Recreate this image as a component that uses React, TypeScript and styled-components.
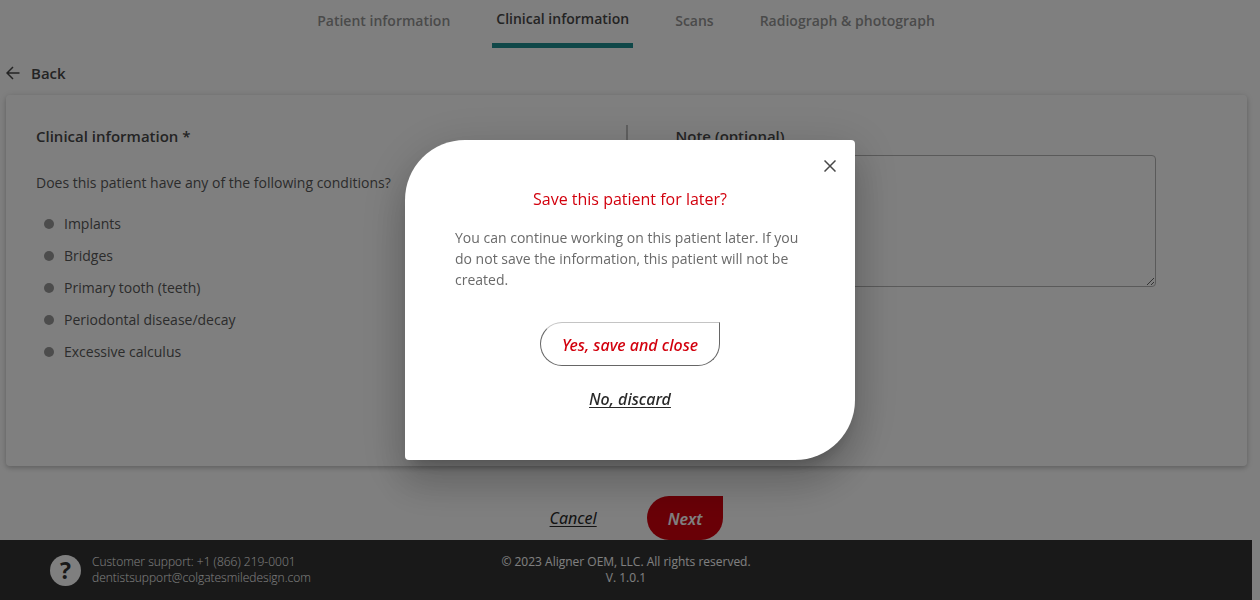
import React from "react";
import styled, { createGlobalStyle, css } from "styled-components";

const bodyFont = '"Open Sans", "Noto Sans", sans-serif';
const actionFont = '"Noto Sans", "Open Sans", sans-serif';

const GlobalStyle = createGlobalStyle`
  *, *::before, *::after { box-sizing: border-box; }
  body {
    margin: 0;
    background: #fff;
    color: #585858;
    font-family: ${bodyFont};
    font-size: 14px;
    font-weight: 400;
  }
  h1, h2, p, ul { margin: 0; padding: 0; }
  button, textarea { font-family: inherit; }
`;

const Page = styled.div`
  display: flex;
  flex-direction: column;
  min-height: 100vh;
  padding-right: 8px;
`;

const Tabs = styled.nav`
  display: flex;
  justify-content: center;
  align-items: flex-start;
  gap: 38px;
  height: 48px;
`;

const Tab = styled.a<{ $active?: boolean }>`
  padding: 11px 4px;
  color: #959595;
  font-size: 14px;
  font-weight: 600;
  line-height: 20px;
  text-decoration: none;
  ${(p) =>
    p.$active &&
    css`
      padding: 9px 4px 14px;
      color: #484848;
      border-bottom: 5px solid #1e8e90;
    `}
`;

const Content = styled.main`
  display: flex;
  flex-direction: column;
  flex: 1;
  padding: 0 5px 0 6px;
`;

const BackLink = styled.a`
  display: flex;
  align-items: center;
  align-self: flex-start;
  gap: 11px;
  padding: 13px 0 10px;
  color: #484848;
  font-size: 15px;
  font-weight: 600;
  line-height: 24px;
  text-decoration: none;
`;

const Card = styled.section`
  display: grid;
  grid-template-columns: 1fr 1fr;
  flex: 1;
  min-height: 371px;
  padding: 30px 32px 30px 30px;
  border-radius: 4px;
  background: #fff;
  box-shadow: 0 2px 4px rgba(0, 0, 0, 0.16), 0 1px 8px rgba(0, 0, 0, 0.12);
`;

const NotePanel = styled.div`
  display: flex;
  flex-direction: column;
  align-items: flex-start;
  gap: 8px;
  padding-left: 48px;
  border-left: 2px solid #c0c0c0;
`;

const sectionTitle = css`
  color: #484848;
  font-size: 15px;
  font-weight: 600;
  line-height: 22px;
`;

const SectionTitle = styled.h1`
  ${sectionTitle}
`;

const NoteLabel = styled.label`
  ${sectionTitle}
`;

const NoteInput = styled.textarea`
  width: 89%;
  height: 132px;
  padding: 8px;
  border: 1px solid #b4b4b4;
  border-radius: 4px;
  background: transparent;
  font-size: 14px;
`;

const Question = styled.p`
  margin-top: 26px;
  line-height: 20px;
`;

const ConditionList = styled.ul`
  margin-top: 15px;
  padding-left: 8px;
  list-style: none;
`;

const Condition = styled.label`
  display: flex;
  align-items: center;
  gap: 10px;
  line-height: 32px;
`;

const Dot = styled.input`
  appearance: none;
  width: 10px;
  height: 10px;
  margin: 0;
  border-radius: 50%;
  background: #989898;
`;

const Actions = styled.div`
  display: flex;
  justify-content: center;
  align-items: center;
  gap: 50px;
  padding: 30px 0 0 20px;
`;

const TextButton = styled.button<{ $strong?: boolean }>`
  padding: 0;
  border: 0;
  background: none;
  color: #282828;
  font-family: ${actionFont};
  font-size: 16px;
  font-style: italic;
  font-weight: ${(p) => (p.$strong ? 500 : 400)};
  line-height: 24px;
  text-decoration: underline;
  text-decoration-skip-ink: none;
  text-underline-offset: 2px;
`;

const PillButton = styled.button<{ $filled?: boolean }>`
  height: 44px;
  padding: 2px 21px 0;
  border: 1px solid #666;
  border-top-color: #c4c4c4;
  border-radius: 22px 0 22px 22px;
  background: #fff;
  color: #d2000d;
  font-family: ${actionFont};
  font-size: 16px;
  font-style: italic;
  font-weight: 500;
  line-height: 24px;
  ${(p) =>
    p.$filled &&
    css`
      border: 0;
      color: #fff;
      background: #d2000d;
      font-weight: 600;
    `}
`;

const Footer = styled.footer`
  display: grid;
  grid-template-columns: 1fr auto 1fr;
  align-items: center;
  height: 60px;
  padding: 0 50px;
  background: #333;
  color: #fff;
  font-size: 12px;
  line-height: 16px;
`;

const Support = styled.div`
  display: flex;
  align-items: center;
  gap: 11px;
  font-weight: 300;
`;

const HelpBadge = styled.span`
  display: flex;
  align-items: center;
  justify-content: center;
  width: 31px;
  height: 31px;
  border-radius: 50%;
  background: #fff;
  color: #333;
  font-size: 23px;
  font-weight: 700;
`;

const FooterLink = styled.a`
  color: inherit;
  text-decoration: none;
`;

const Copyright = styled.p`
  text-align: center;
`;

const Overlay = styled.div`
  position: fixed;
  inset: 0;
  display: flex;
  align-items: center;
  justify-content: center;
  background: rgba(0, 0, 0, 0.5);
`;

const Dialog = styled.div`
  display: flex;
  flex-direction: column;
  width: 450px;
  max-width: 100%;
  padding: 16px 15px 49px;
  border-radius: 60px 4px 60px 4px;
  background: #fff;
  box-shadow: 0 11px 15px -7px rgba(0, 0, 0, 0.2),
    0 24px 38px 3px rgba(0, 0, 0, 0.14), 0 9px 46px 8px rgba(0, 0, 0, 0.12);
`;

const CloseButton = styled.button`
  display: flex;
  align-items: center;
  justify-content: center;
  align-self: flex-end;
  width: 20px;
  height: 20px;
  padding: 0;
  border: 0;
  background: none;
  color: #484848;
`;

const DialogBody = styled.div`
  display: flex;
  flex-direction: column;
  align-items: center;
  padding: 11px 35px 0;
`;

const DialogTitle = styled.h2`
  color: #d2000d;
  font-size: 16px;
  font-weight: 400;
  line-height: 24px;
`;

const DialogText = styled.p`
  margin: 16px 0 32px;
  color: #6a6a6a;
  line-height: 21px;
`;

const DialogActions = styled.div`
  display: flex;
  flex-direction: column;
  align-items: center;
  gap: 21px;
`;

const conditions = [
  "Implants",
  "Bridges",
  "Primary tooth (teeth)",
  "Periodontal disease/decay",
  "Excessive calculus",
];

export default function App() {
  return (
    <>
      <GlobalStyle />
      <Page>
        <Tabs>
          <Tab href="#patient">Patient information</Tab>
          <Tab href="#clinical" $active aria-current="page">
            Clinical information
          </Tab>
          <Tab href="#scans">Scans</Tab>
          <Tab href="#radiograph">Radiograph &amp; photograph</Tab>
        </Tabs>
        <Content>
          <BackLink href="#back">
            <svg width="14" height="14" viewBox="0 0 14 14" fill="none" stroke="currentColor" strokeWidth="1.5" aria-hidden="true">
              <path d="M13.5 7H1.2M7 1L1 7l6 6" />
            </svg>
            Back
          </BackLink>
          <Card>
            <div>
              <SectionTitle>Clinical information *</SectionTitle>
              <Question>Does this patient have any of the following conditions?</Question>
              <ConditionList>
                {conditions.map((name) => (
                  <li key={name}>
                    <Condition>
                      <Dot type="checkbox" />
                      {name}
                    </Condition>
                  </li>
                ))}
              </ConditionList>
            </div>
            <NotePanel>
              <NoteLabel htmlFor="note">Note (optional)</NoteLabel>
              <NoteInput id="note" />
            </NotePanel>
          </Card>
          <Actions>
            <TextButton type="button">Cancel</TextButton>
            <PillButton type="button" $filled>
              Next
            </PillButton>
          </Actions>
        </Content>
        <Footer>
          <Support>
            <HelpBadge>?</HelpBadge>
            <div>
              <div>Customer support: +1 (866) 219-0001</div>
              <FooterLink href="mailto:dentistsupport@colgatesmiledesign.com">
                dentistsupport@colgatesmiledesign.com
              </FooterLink>
            </div>
          </Support>
          <Copyright>
            © 2023 Aligner OEM, LLC. All rights reserved.
            <br />
            V. 1.0.1
          </Copyright>
        </Footer>
      </Page>
      <Overlay>
        <Dialog role="dialog" aria-modal="true" aria-labelledby="save-title">
          <CloseButton type="button" aria-label="Close">
            <svg width="12" height="12" viewBox="0 0 12 12" fill="none" stroke="currentColor" strokeWidth="1.5" aria-hidden="true">
              <path d="M0.5 0.5l11 11M11.5 0.5l-11 11" />
            </svg>
          </CloseButton>
          <DialogBody>
            <DialogTitle id="save-title">Save this patient for later?</DialogTitle>
            <DialogText>
              You can continue working on this patient later. If you do not save the
              information, this patient will not be created.
            </DialogText>
            <DialogActions>
              <PillButton type="button">Yes, save and close</PillButton>
              <TextButton type="button" $strong>
                No, discard
              </TextButton>
            </DialogActions>
          </DialogBody>
        </Dialog>
      </Overlay>
    </>
  );
}
